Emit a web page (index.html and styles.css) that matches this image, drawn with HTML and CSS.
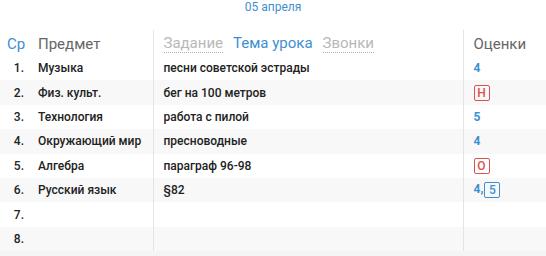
FILE: index.html
```html
<!DOCTYPE html>
<html lang="ru">
<head>
<meta charset="utf-8">
<link rel="stylesheet" href="styles.css">
</head>
<body>
<div class="page">
  <div class="date">05 апреля</div>
  <table class="diary">
    <thead>
      <tr class="head">
        <th class="c-num"><span class="day">Ср</span></th>
        <th class="c-subj">Предмет</th>
        <th class="c-topic">
          <div class="tabs">
            <span class="tab dotted">Задание</span>
            <span class="tab active">Тема урока</span>
            <span class="tab dotted">Звонки</span>
          </div>
        </th>
        <th class="c-marks">Оценки</th>
      </tr>
    </thead>
    <tbody>
      <tr><td class="c-num">1.</td><td class="c-subj">Музыка</td><td class="c-topic">песни советской эстрады</td><td class="c-marks"><span class="mark">4</span></td></tr>
      <tr><td class="c-num">2.</td><td class="c-subj">Физ. культ.</td><td class="c-topic">бег на 100 метров</td><td class="c-marks"><span class="box red">Н</span></td></tr>
      <tr><td class="c-num">3.</td><td class="c-subj">Технология</td><td class="c-topic">работа с пилой</td><td class="c-marks"><span class="mark">5</span></td></tr>
      <tr><td class="c-num">4.</td><td class="c-subj">Окружающий мир</td><td class="c-topic">пресноводные</td><td class="c-marks"><span class="mark">4</span></td></tr>
      <tr><td class="c-num">5.</td><td class="c-subj">Алгебра</td><td class="c-topic">параграф 96-98</td><td class="c-marks"><span class="box red">О</span></td></tr>
      <tr><td class="c-num">6.</td><td class="c-subj">Русский язык</td><td class="c-topic">§82</td><td class="c-marks"><span class="mark">4</span><span class="comma">,</span><span class="box blue">5</span></td></tr>
      <tr><td class="c-num">7.</td><td class="c-subj"></td><td class="c-topic"></td><td class="c-marks"></td></tr>
      <tr><td class="c-num">8.</td><td class="c-subj"></td><td class="c-topic"></td><td class="c-marks"></td></tr>
    </tbody>
  </table>
</div>
</body>
</html>
```

FILE: styles.css
```css
* { box-sizing: border-box; }
html, body { margin: 0; padding: 0; background: #f4f4f4; }
body { font-family: Roboto, "Noto Sans", "Liberation Sans", sans-serif; }
.page { width: 546px; height: 251px; background: #fff; border-bottom: 1px solid #e4e4e4; }
.date { height: 30px; text-align: center; color: #3d8fd1; font-size: 12px; line-height: 15px; padding-top: 0; }
.diary { width: 546px; border-collapse: collapse; table-layout: fixed; }
.diary th, .diary td { padding: 0; text-align: left; }
.head th { height: 26px; font-weight: 400; font-size: 15px; color: #666; vertical-align: top; padding-top: 5px; line-height: 18px; }
.c-num { width: 30px; }
.c-subj { width: 123px; padding-left: 8px !important; border-right: 1px solid #e4e4e4; }
.c-topic { width: 310px; padding-left: 10px !important; border-right: 1px solid #e4e4e4; }
.c-marks { padding-left: 10px !important; }
.head .c-num { padding-left: 7px !important; }
.day { color: #3d8fd1; }
.tabs { display: flex; gap: 10px; }
.tab { line-height: 17px; }
.tab.dotted { color: #b8b8b8; border-bottom: 1px dotted #b0b0b0; }
.tab.active { color: #3d8fd1; }
tbody tr { height: 24.4px; }
tbody tr:nth-child(even) td { background: #f8f8f8; }
tbody td { font-size: 12px; font-weight: 500; color: #222; line-height: 14px; }
tbody td.c-num { text-align: right; padding-right: 6px !important; }
.mark { color: #3d8fd1; font-weight: 700; }
.comma { color: #3d8fd1; font-weight: 700; margin-right: 1px; }
.box { display: inline-block; min-width: 16px; height: 16px; line-height: 14px; border: 1px solid; border-radius: 2px; text-align: center; font-weight: 500; font-size: 12px; padding: 0 2px; vertical-align: middle; }
.box.red { color: #d9534f; border-color: #d9534f; }
.box.blue { color: #3d8fd1; border-color: #3d8fd1; }
```
